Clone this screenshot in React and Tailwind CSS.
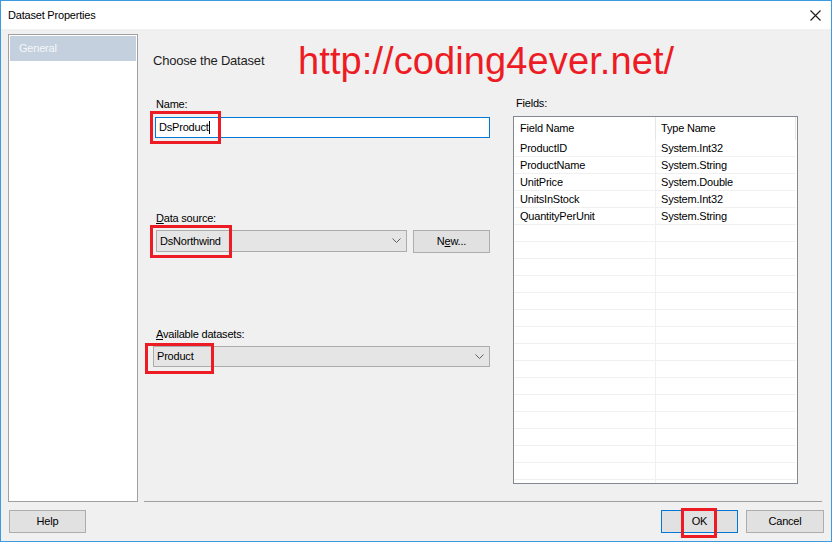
import React from 'react'

const FIELDS = [
  ['ProductID', 'System.Int32'],
  ['ProductName', 'System.String'],
  ['UnitPrice', 'System.Double'],
  ['UnitsInStock', 'System.Int32'],
  ['QuantityPerUnit', 'System.String'],
]

const Chevron = () => (
  <svg width="9" height="6" viewBox="0 0 9 6" className="shrink-0">
    <polyline points="0.5,0.5 4.5,4.5 8.5,0.5" fill="none" stroke="#606060" strokeWidth="1" />
  </svg>
)

const RedBox = ({ className }) => (
  <div className={'absolute border-[3px] border-[#ed1c24] pointer-events-none ' + className} />
)

const Button = ({ children, className = '' }) => (
  <div className={'h-[23px] flex items-center justify-center bg-[#e1e1e1] border text-[11px] text-black ' + className}>
    {children}
  </div>
)

export default function App() {
  const rows = [...FIELDS, ...Array(17).fill(['', ''])]

  return (
    <div
      className="w-[832px] h-[542px] border border-[#3c9ae0] flex flex-col bg-[#f0f0f0] text-black tracking-[-0.2px] overflow-hidden"
      style={{ fontFamily: '"Liberation Sans", Arial, sans-serif' }}
    >
      {/* title bar */}
      <div className="h-[28px] bg-white flex items-center justify-between pl-[7px] pr-[10px] shrink-0">
        <span className="text-[11px]">Dataset Properties</span>
        <svg width="11" height="11" viewBox="0 0 11 11">
          <path d="M0.5 0.5 L10.5 10.5 M10.5 0.5 L0.5 10.5" stroke="#1a1a1a" strokeWidth="1.1" />
        </svg>
      </div>

      <div className="flex-1 flex flex-col pt-[5px]">
        <div className="flex">
          {/* page list */}
          <div className="ml-[7px] w-[130px] h-[468px] border border-[#a0a0a0] bg-white p-[1px]">
            <div className="h-[25px] bg-[#c4d0dd] text-[#f4f7fa] text-[11px] flex items-center pl-[9px]">General</div>
          </div>

          {/* page content */}
          <div className="ml-[6px] w-[678px] h-[468px] border-b border-[#a0a0a0] flex flex-col">
            <div className="mt-[7px] h-[40px] flex items-center pl-[9px]">
              <span className="w-[145px] text-[13px] text-[#1e1e1e]">Choose the Dataset</span>
              <span className="text-[38px] leading-none text-[#ed1c24] tracking-[0.1px]">http://coding4ever.net/</span>
            </div>

            <div className="flex mt-[16px] pl-[11px]">
              {/* left form */}
              <div className="w-[335px] flex flex-col">
                <div className="h-[14px] leading-[14px] text-[11px] pl-[1px]">Name:</div>
                <div className="relative mt-[6px] h-[21px] bg-white border border-[#0078d7] flex items-center pl-[3px] text-[11px]">
                  <span>DsProduct</span>
                  <span className="w-px h-[13px] bg-black" />
                  <RedBox className="-left-[6px] -top-[7px] w-[71px] h-[33px]" />
                </div>

                <div className="mt-[73px] h-[14px] leading-[14px] text-[11px] pl-[1px]">
                  <span className="underline">D</span>ata source:
                </div>
                <div className="mt-[5px] flex">
                  <div className="relative ml-[1px] w-[251px] h-[22px] bg-[#e5e5e5] border border-[#acacac] flex items-center justify-between pl-[3px] pr-[5px] text-[11px]">
                    <span>DsNorthwind</span>
                    <Chevron />
                    <RedBox className="-left-[7px] -top-[6px] w-[82px] h-[33px]" />
                  </div>
                  <Button className="ml-[6px] w-[77px] h-[22px] border-[#adadad]">
                    N<span className="underline">e</span>w...
                  </Button>
                </div>

                <div className="mt-[74px] h-[14px] leading-[14px] text-[11px] pl-[1px]">
                  <span className="underline">A</span>vailable datasets:
                </div>
                <div className="relative mt-[5px] -ml-[2px] w-[337px] h-[21px] bg-[#e5e5e5] border border-[#acacac] flex items-center justify-between pl-[3px] pr-[5px] text-[11px]">
                  <span>Product</span>
                  <Chevron />
                  <RedBox className="-left-[9px] -top-[4px] w-[69px] h-[31px]" />
                </div>
              </div>

              {/* fields list */}
              <div className="ml-[23px] w-[285px] flex flex-col -mt-[1px]">
                <div className="h-[14px] leading-[14px] text-[11px] pl-[3px]">Fields:</div>
                <div className="mt-[6px] h-[368px] border border-[#828790] bg-white overflow-hidden text-[11px]">
                  <div className="h-[23px] flex">
                    <div className="w-[142px] border-r border-[#e5e5e5] flex items-center pl-[6px]">Field Name</div>
                    <div className="w-[140px] border-r border-[#e5e5e5] flex items-center pl-[5px]">Type Name</div>
                  </div>
                  {rows.map((r, i) => (
                    <div key={i} className="h-[17px] flex border-b border-[#f0f0f0] w-[282px]">
                      <div className="w-[142px] border-r border-[#f0f0f0] flex items-center pl-[6px]">{r[0]}</div>
                      <div className="flex-1 flex items-center pl-[5px]">{r[1]}</div>
                    </div>
                  ))}
                </div>
              </div>
            </div>
          </div>
        </div>

        {/* footer */}
        <div className="flex justify-between pt-[8px]">
          <Button className="ml-[8px] w-[77px] border-[#adadad]">Help</Button>
          <div className="flex gap-[8px] mr-[7px]">
            <div className="relative">
              <Button className="w-[77px] border-[#0078d7]">OK</Button>
              <RedBox className="left-[20px] -top-[2px] w-[36px] h-[30px]" />
            </div>
            <Button className="w-[78px] border-[#adadad]">Cancel</Button>
          </div>
        </div>
      </div>
    </div>
  )
}
